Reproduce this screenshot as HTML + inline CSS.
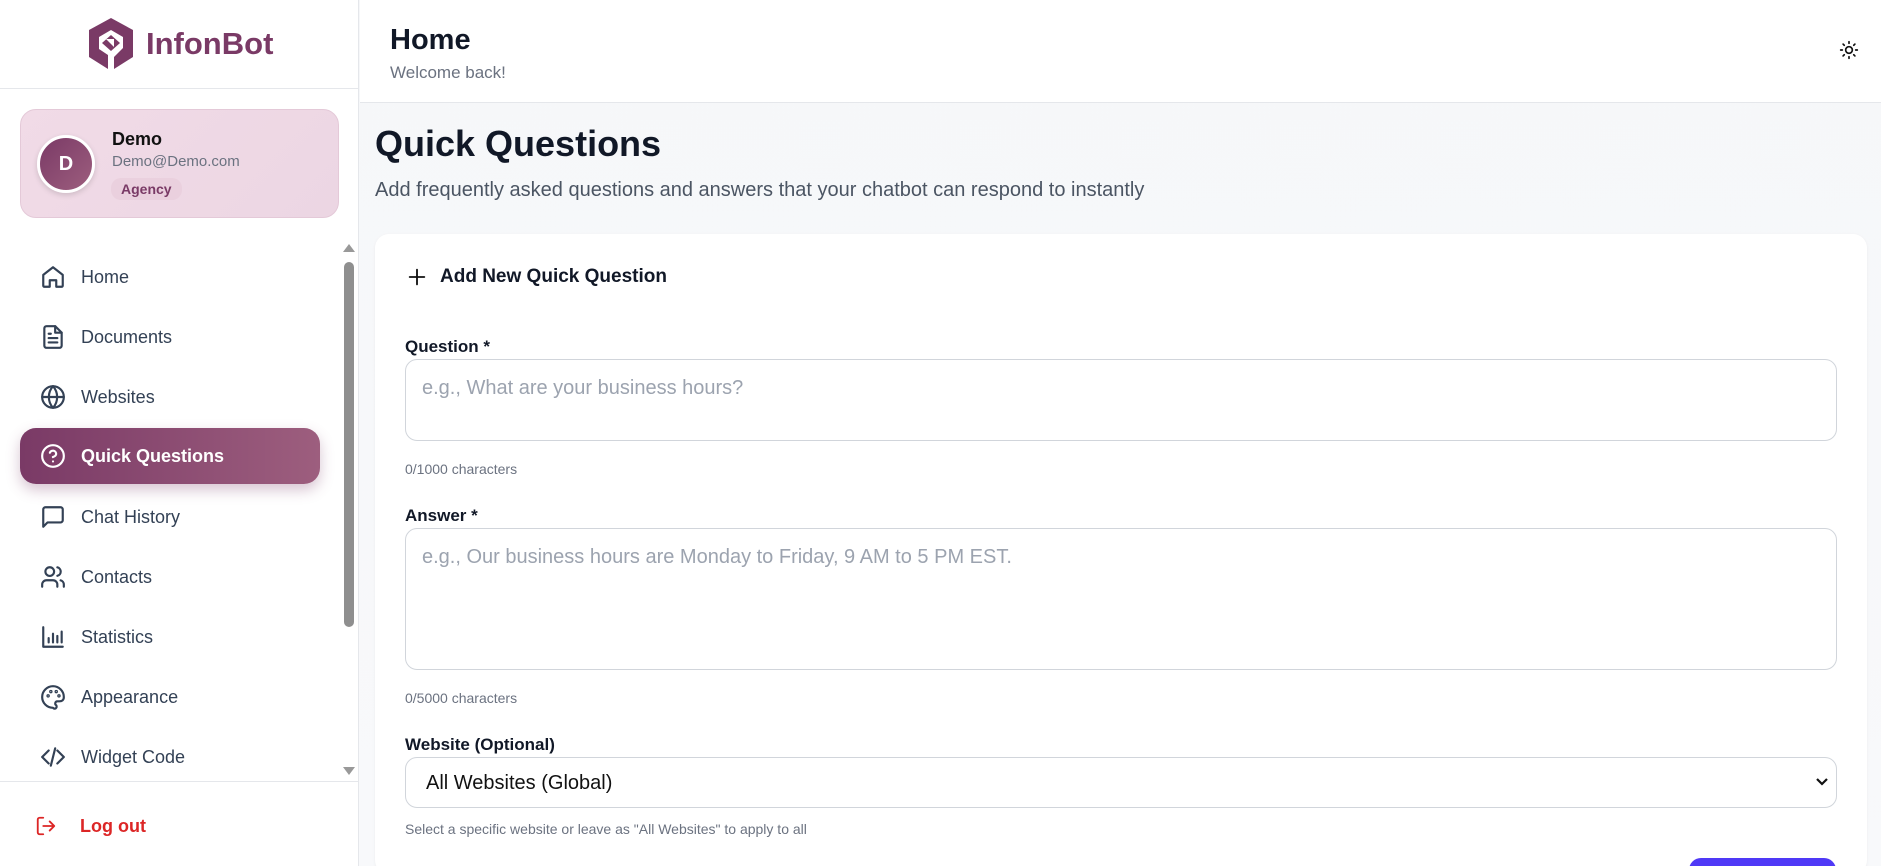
<!DOCTYPE html>
<html><head><meta charset="utf-8"><style>
*{box-sizing:border-box;margin:0;padding:0}
html{width:1881px;height:866px;overflow:hidden}
body{width:1881px;height:866px;overflow:hidden;font-family:"Liberation Sans",sans-serif;background:linear-gradient(180deg,#f6f7f9,#f8f9fb);position:relative;color:#111827}
.abs{position:absolute}
#side{left:0;top:0;width:359px;height:866px;background:#fff;border-right:1px solid #e5e7eb}
.nav{position:absolute;left:20px;width:300px;height:56px;display:flex;align-items:center;padding-left:20px;font-size:18px;color:#334155}
.nav svg{width:26px;height:26px;margin-right:15px;fill:none;stroke:#334155;stroke-width:2;stroke-linecap:round;stroke-linejoin:round}
.nav.act{background:linear-gradient(90deg,#7a3a66,#9d5e7e);color:#fff;border-radius:16px;box-shadow:0 6px 14px rgba(122,58,102,.3);font-weight:bold}
.nav.act svg{stroke:#fff}
.lbl{font-size:17px;font-weight:bold;color:#111827;position:absolute;left:405px}
.ta{position:absolute;left:405px;width:1432px;border:1px solid #d1d5db;border-radius:12px;background:#fff;font-size:20px;color:#9ca3af;padding:17px 0 0 16px}
.hint{position:absolute;left:405px;font-size:14px;color:#6b7280}
</style></head><body>
<div id="side" class="abs">
  <svg class="abs" style="left:86px;top:17px" width="50" height="54" viewBox="0 0 50 54"><path d="M25 1 L47 13 L47 40 L28 52 L28 40 L37 31 L37 20 L25 13 L13 20 L13 32 L22 38 L22 52 L3 40 L3 13 Z" fill="#7a3a66"/><path d="M25 18 L34 26 L25 34 L16 26 Z" fill="#7a3a66"/><path d="M20 22 L28 22 L28 30 Z" fill="#fff"/></svg>
  <div class="abs" style="left:146px;top:26px;font-size:31px;font-weight:bold;color:#7a3a66">InfonBot</div>
  <div class="abs" style="left:0;top:88px;width:359px;border-top:1px solid #e5e7eb"></div>
  <div class="abs" style="left:20px;top:109px;width:319px;height:109px;border-radius:16px;background:linear-gradient(135deg,#f1dbe7,#ecd6e3);border:1px solid #e4c9d8"></div>
  <div class="abs" style="left:37px;top:135px;width:58px;height:58px;border-radius:50%;background:linear-gradient(135deg,#7a3a66,#9d5e7e);border:3px solid #fff;color:#fff;font-weight:bold;font-size:20px;display:flex;align-items:center;justify-content:center;box-shadow:0 2px 6px rgba(0,0,0,.15)">D</div>
  <div class="abs" style="left:112px;top:129px;font-size:18px;font-weight:bold;color:#111">Demo</div>
  <div class="abs" style="left:112px;top:153px;font-size:15px;color:#6b7280">Demo@Demo.com</div>
  <div class="abs" style="left:111px;top:178px;padding:3px 10px;border-radius:10px;background:#ead0de;font-size:14px;font-weight:bold;color:#7a3a66">Agency</div>

  <div class="nav" style="top:249px"><svg viewBox="0 0 24 24"><path d="M3 10l9-7 9 7v10a1 1 0 0 1-1 1h-5v-6h-6v6H4a1 1 0 0 1-1-1z"/></svg>Home</div>
  <div class="nav" style="top:309px"><svg viewBox="0 0 24 24"><path d="M14 2H6a2 2 0 0 0-2 2v16a2 2 0 0 0 2 2h12a2 2 0 0 0 2-2V8z"/><path d="M14 2v6h6M8 13h8M8 17h8M8 9h2"/></svg>Documents</div>
  <div class="nav" style="top:369px"><svg viewBox="0 0 24 24"><circle cx="12" cy="12" r="10"/><path d="M2 12h20M12 2a15 15 0 0 1 0 20M12 2a15 15 0 0 0 0 20"/></svg>Websites</div>
  <div class="nav act" style="top:428px"><svg viewBox="0 0 24 24"><circle cx="12" cy="12" r="10"/><path d="M9.1 9a3 3 0 0 1 5.8 1c0 2-3 3-3 3M12 17h.01"/></svg>Quick Questions</div>
  <div class="nav" style="top:489px"><svg viewBox="0 0 24 24"><path d="M21 15a2 2 0 0 1-2 2H7l-4 4V5a2 2 0 0 1 2-2h14a2 2 0 0 1 2 2z"/></svg>Chat History</div>
  <div class="nav" style="top:549px"><svg viewBox="0 0 24 24"><path d="M16 21v-2a4 4 0 0 0-4-4H6a4 4 0 0 0-4 4v2"/><circle cx="9" cy="7" r="4"/><path d="M22 21v-2a4 4 0 0 0-3-3.9M16 3.1a4 4 0 0 1 0 7.8"/></svg>Contacts</div>
  <div class="nav" style="top:609px"><svg viewBox="0 0 24 24"><path d="M3 3v18h18M8 17v-4M12 17V9M16 17v-6M20 17V7"/></svg>Statistics</div>
  <div class="nav" style="top:669px"><svg viewBox="0 0 24 24"><path d="M12 22a10 10 0 1 1 10-10c0 3-2 4-4 4h-2a2 2 0 0 0-1 3.7A1.6 1.6 0 0 1 12 22z"/><circle cx="7.5" cy="11" r=".6"/><circle cx="10" cy="7" r=".6"/><circle cx="15" cy="7" r=".6"/><circle cx="17.5" cy="11" r=".6"/></svg>Appearance</div>
  <div class="nav" style="top:729px"><svg viewBox="0 0 24 24"><path d="M16 18l6-6-6-6M8 6l-6 6 6 6M14 4l-4 16"/></svg>Widget Code</div>

  <div class="abs" style="left:343px;top:244px;width:0;height:0;border-left:6px solid transparent;border-right:6px solid transparent;border-bottom:8px solid #999"></div>
  <div class="abs" style="left:344px;top:262px;width:10px;height:365px;border-radius:5px;background:#8f8f8f"></div>
  <div class="abs" style="left:343px;top:767px;width:0;height:0;border-left:6px solid transparent;border-right:6px solid transparent;border-top:8px solid #999"></div>
  <div class="abs" style="left:0;top:781px;width:359px;border-top:1px solid #e5e7eb"></div>
  <svg class="abs" style="left:35px;top:815px" width="22" height="22" viewBox="0 0 24 24" fill="none" stroke="#dc2626" stroke-width="2" stroke-linecap="round" stroke-linejoin="round"><path d="M9 21H5a2 2 0 0 1-2-2V5a2 2 0 0 1 2-2h4M16 17l5-5-5-5M21 12H9"/></svg>
  <div class="abs" style="left:80px;top:816px;font-size:18px;font-weight:bold;color:#dc2626">Log out</div>
</div>

<div class="abs" style="left:360px;top:0;width:1521px;height:103px;background:#fff;border-bottom:1px solid #e5e7eb"></div>
<div class="abs" style="left:390px;top:24px;font-size:29px;font-weight:bold;color:#111827">Home</div>
<div class="abs" style="left:390px;top:63px;font-size:17px;color:#6b7280">Welcome back!</div>
<svg class="abs" style="left:1839px;top:40px" width="20" height="20" viewBox="0 0 24 24" fill="none" stroke="#111" stroke-width="2" stroke-linecap="round"><circle cx="12" cy="12" r="4"/><path d="M12 2v2M12 20v2M4.9 4.9l1.4 1.4M17.7 17.7l1.4 1.4M2 12h2M20 12h2M4.9 19.1l1.4-1.4M17.7 6.3l1.4-1.4"/></svg>

<div class="abs" style="left:375px;top:123px;font-size:36px;font-weight:bold;color:#111827">Quick Questions</div>
<div class="abs" style="left:375px;top:179px;font-size:20px;color:#4b5563">Add frequently asked questions and answers that your chatbot can respond to instantly</div>

<div class="abs" style="left:375px;top:234px;width:1492px;height:640px;background:#fff;border-radius:14px;box-shadow:0 1px 3px rgba(0,0,0,.05)"></div>
<svg class="abs" style="left:406px;top:266px" width="22" height="22" viewBox="0 0 24 24" fill="none" stroke="#111" stroke-width="2" stroke-linecap="round"><path d="M12 4v16M4 12h16"/></svg>
<div class="abs" style="left:440px;top:266px;font-size:19px;font-weight:bold;color:#111827">Add New Quick Question</div>

<div class="lbl" style="top:337px">Question *</div>
<div class="ta" style="top:359px;height:82px">e.g., What are your business hours?</div>
<div class="hint" style="top:461px">0/1000 characters</div>
<div class="lbl" style="top:506px">Answer *</div>
<div class="ta" style="top:528px;height:142px">e.g., Our business hours are Monday to Friday, 9 AM to 5 PM EST.</div>
<div class="hint" style="top:690px">0/5000 characters</div>
<div class="lbl" style="top:735px">Website (Optional)</div>
<div class="ta" style="top:757px;height:51px;color:#111;padding:14px 0 0 20px">All Websites (Global)</div>
<svg class="abs" style="left:1815px;top:775px" width="14" height="14" viewBox="0 0 14 14" fill="none" stroke="#111" stroke-width="2.2"><path d="M2 4l5 5 5-5"/></svg>
<div class="hint" style="top:821px">Select a specific website or leave as "All Websites" to apply to all</div>
<div class="abs" style="left:1689px;top:858px;width:147px;height:30px;border-radius:12px;background:#4f39f6"></div>
</body></html>
